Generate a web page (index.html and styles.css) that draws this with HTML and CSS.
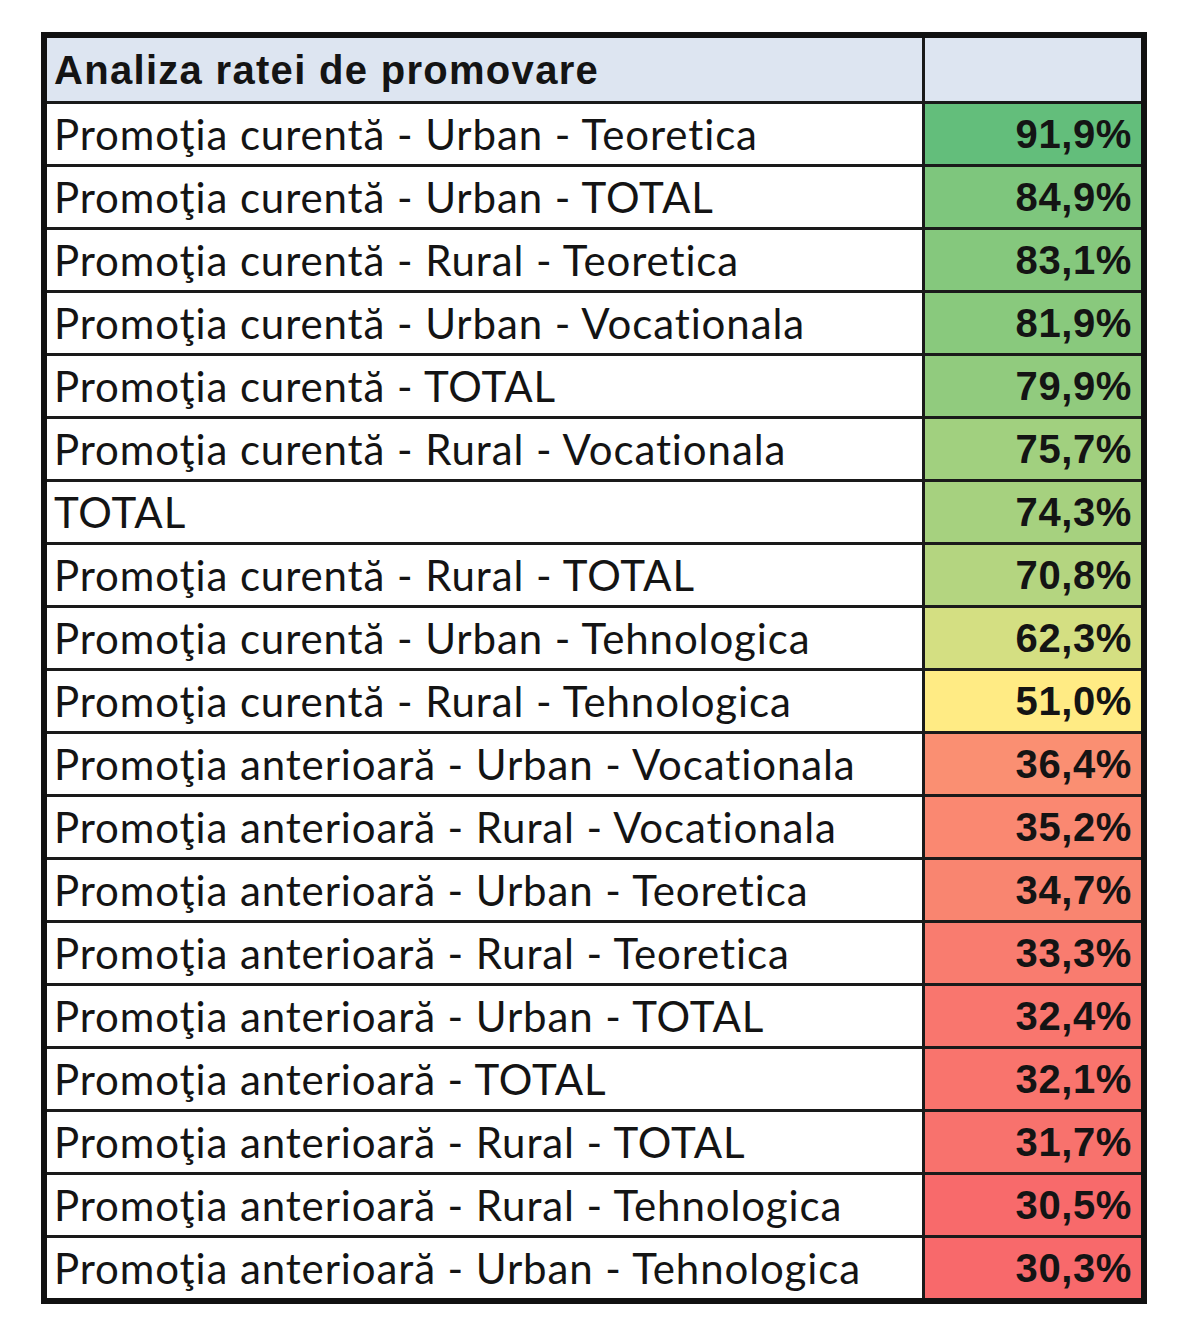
FILE: index.html
```html
<!DOCTYPE html>
<html lang="ro">
<head>
<meta charset="utf-8">
<title>Analiza ratei de promovare</title>
<link rel="stylesheet" href="styles.css">
</head>
<body>
<table class="rates">
  <thead>
    <tr class="head-row">
      <th class="label head-label">Analiza ratei de promovare</th>
      <th class="value head-value"></th>
    </tr>
  </thead>
  <tbody>
    <tr><td class="label">Promoţia curentă - Urban - Teoretica</td><td class="value" style="background:rgb(99,190,123)">91,9%</td></tr>
    <tr><td class="label">Promoţia curentă - Urban - TOTAL</td><td class="value" style="background:rgb(126,198,125)">84,9%</td></tr>
    <tr><td class="label">Promoţia curentă - Rural - Teoretica</td><td class="value" style="background:rgb(133,200,125)">83,1%</td></tr>
    <tr><td class="label">Promoţia curentă - Urban - Vocationala</td><td class="value" style="background:rgb(137,201,125)">81,9%</td></tr>
    <tr><td class="label">Promoţia curentă - TOTAL</td><td class="value" style="background:rgb(145,203,126)">79,9%</td></tr>
    <tr><td class="label">Promoţia curentă - Rural - Vocationala</td><td class="value" style="background:rgb(161,208,127)">75,7%</td></tr>
    <tr><td class="label">TOTAL</td><td class="value" style="background:rgb(166,209,127)">74,3%</td></tr>
    <tr><td class="label">Promoţia curentă - Rural - TOTAL</td><td class="value" style="background:rgb(180,213,128)">70,8%</td></tr>
    <tr><td class="label">Promoţia curentă - Urban - Tehnologica</td><td class="value" style="background:rgb(212,223,130)">62,3%</td></tr>
    <tr><td class="label">Promoţia curentă - Rural - Tehnologica</td><td class="value" style="background:rgb(255,235,132)">51,0%</td></tr>
    <tr><td class="label">Promoţia anterioară - Urban - Vocationala</td><td class="value" style="background:rgb(250,143,114)">36,4%</td></tr>
    <tr><td class="label">Promoţia anterioară - Rural - Vocationala</td><td class="value" style="background:rgb(250,136,113)">35,2%</td></tr>
    <tr><td class="label">Promoţia anterioară - Urban - Teoretica</td><td class="value" style="background:rgb(249,133,112)">34,7%</td></tr>
    <tr><td class="label">Promoţia anterioară - Rural - Teoretica</td><td class="value" style="background:rgb(249,124,111)">33,3%</td></tr>
    <tr><td class="label">Promoţia anterioară - Urban - TOTAL</td><td class="value" style="background:rgb(249,118,110)">32,4%</td></tr>
    <tr><td class="label">Promoţia anterioară - TOTAL</td><td class="value" style="background:rgb(249,116,109)">32,1%</td></tr>
    <tr><td class="label">Promoţia anterioară - Rural - TOTAL</td><td class="value" style="background:rgb(248,114,109)">31,7%</td></tr>
    <tr><td class="label">Promoţia anterioară - Rural - Tehnologica</td><td class="value" style="background:rgb(248,106,107)">30,5%</td></tr>
    <tr><td class="label">Promoţia anterioară - Urban - Tehnologica</td><td class="value" style="background:rgb(248,105,107)">30,3%</td></tr>
  </tbody>
</table>
</body>
</html>
```

FILE: styles.css
```css
html, body {
  margin: 0;
  padding: 0;
  background: #ffffff;
}

body {
  padding: 32px 0 0 41px;
}

.rates {
  border-collapse: collapse;
  width: 1106px;
  border: 6px solid #111111;
  color: #141414;
}

.rates th,
.rates td {
  border: 3px solid #1a1a1a;
  padding: 0;
  height: 60px;
  line-height: 1;
}

.head-row th {
  height: 63px;
  background: #dde5f1;
}

.label {
  font-family: Lato, "Open Sans", sans-serif;
  font-size: 42px;
  letter-spacing: 0.9px;
  font-weight: 400;
  text-align: left;
  padding-left: 7px !important;
  white-space: nowrap;
}

.head-label {
  font-family: "Liberation Sans", Arial, sans-serif;
  font-weight: 700;
  font-size: 40px;
  letter-spacing: 1.3px;
}

.value {
  width: 207px;
  font-family: "Liberation Sans", Arial, sans-serif;
  font-weight: 700;
  font-size: 40px;
  letter-spacing: 0.6px;
  text-align: right;
  padding-right: 9px !important;
}
```
